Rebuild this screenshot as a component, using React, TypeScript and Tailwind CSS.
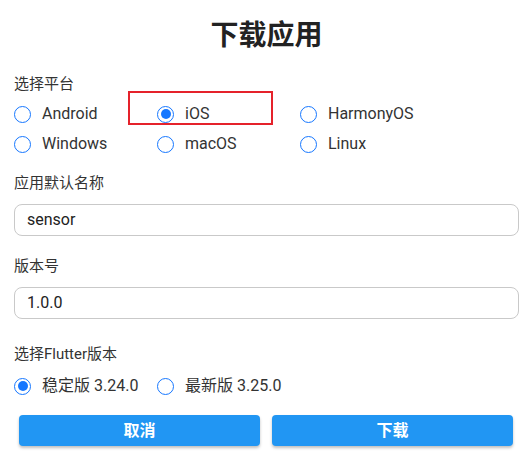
import React from "react";

const FONT = { fontFamily: 'Roboto, "Noto Sans CJK SC", sans-serif' };

type RadioProps = {
  label: string;
  checked?: boolean;
};

function Radio({ label, checked = false }: RadioProps) {
  return (
    <label className="flex items-center h-[30px] text-[16px] text-[#333] cursor-pointer">
      <span className="w-[17px] h-[17px] rounded-full border-[1.5px] border-[#1677ff] flex items-center justify-center shrink-0">
        {checked && <span className="w-[10px] h-[10px] rounded-full bg-[#1677ff]" />}
      </span>
      <span className="ml-[11px] whitespace-nowrap">{label}</span>
    </label>
  );
}

function Field({ value }: { value: string }) {
  return (
    <div className="h-[32px] rounded-[8px] border border-[#c9c9c9] flex items-center px-[12px] text-[16px] text-[#222]">
      {value}
    </div>
  );
}

export default function App() {
  const [platform] = React.useState("iOS");
  const platforms = ["Android", "iOS", "HarmonyOS", "Windows", "macOS", "Linux"];

  return (
    <div className="relative w-[524px] h-[461px] bg-white pl-[14px] pr-[5px]" style={FONT}>
      <h1 className="pt-[16px] h-[56px] leading-[40px] text-center text-[28px] font-bold text-[#222]">
        下载应用
      </h1>

      <p className="mt-[16px] h-[24px] leading-[24px] text-[15px] text-[#333]">选择平台</p>
      <div className="relative mt-[3px] grid grid-cols-[143px_143px_1fr]">
        {platforms.map((p) => (
          <Radio key={p} label={p} checked={p === platform} />
        ))}
        {/* highlight box around the selected platform */}
        <div className="absolute left-[114px] top-[-8px] w-[145px] h-[34px] border-2 border-[#e5222b] pointer-events-none" />
      </div>

      <p className="mt-[12px] h-[24px] leading-[24px] text-[15px] text-[#333]">应用默认名称</p>
      <div className="mt-[9px]">
        <Field value="sensor" />
      </div>

      <p className="mt-[18px] h-[24px] leading-[24px] text-[15px] text-[#333]">版本号</p>
      <div className="mt-[9px]">
        <Field value="1.0.0" />
      </div>

      <p className="mt-[23px] h-[24px] leading-[24px] text-[15px] text-[#333]">选择Flutter版本</p>
      <div className="mt-[5px] grid grid-cols-[143px_1fr]">
        <Radio label="稳定版 3.24.0" checked />
        <Radio label="最新版 3.25.0" />
      </div>

      <div className="mt-[14px] pl-[5px] pr-[6px] flex gap-[12px]">
        <button
          type="button"
          className="flex-1 h-[31px] rounded-[4px] bg-[#2196f3] text-white text-[16px] font-semibold shadow-[0_2px_3px_rgba(0,0,0,0.25)]"
        >
          取消
        </button>
        <button
          type="button"
          className="flex-1 h-[31px] rounded-[4px] bg-[#2196f3] text-white text-[16px] font-semibold shadow-[0_2px_3px_rgba(0,0,0,0.25)]"
        >
          下载
        </button>
      </div>
    </div>
  );
}
